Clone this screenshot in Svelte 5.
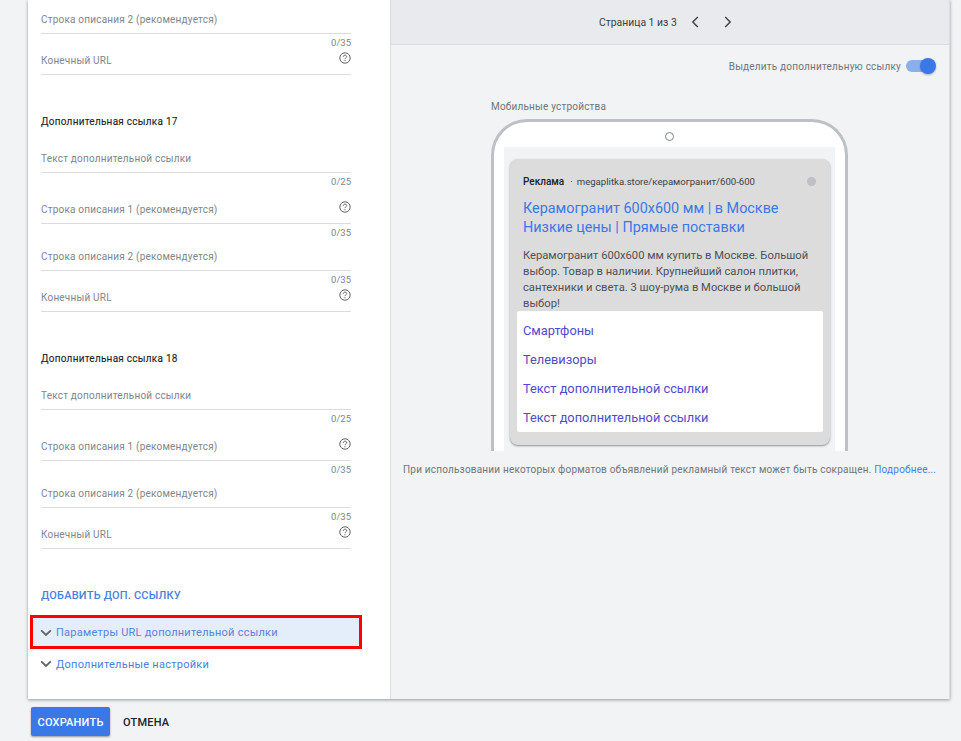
<script>
  const sections = [
    {
      fields: [
        { label: 'Строка описания 2 (рекомендуется)', counter: '0/35', gap: 0 },
        { label: 'Конечный URL', help: true, gap: 0 }
      ]
    },
    {
      title: 'Дополнительная ссылка 17',
      fields: [
        { label: 'Текст дополнительной ссылки', counter: '0/25', gap: 18 },
        { label: 'Строка описания 1 (рекомендуется)', counter: '0/35', help: true, gap: 10 },
        { label: 'Строка описания 2 (рекомендуется)', counter: '0/35', gap: 6 },
        { label: 'Конечный URL', help: true, gap: 0 }
      ]
    },
    {
      title: 'Дополнительная ссылка 18',
      fields: [
        { label: 'Текст дополнительной ссылки', counter: '0/25', gap: 18 },
        { label: 'Строка описания 1 (рекомендуется)', counter: '0/35', help: true, gap: 10 },
        { label: 'Строка описания 2 (рекомендуется)', counter: '0/35', gap: 6 },
        { label: 'Конечный URL', help: true, gap: 0 }
      ]
    }
  ];

  const sitelinks = ['Смартфоны', 'Телевизоры', 'Текст дополнительной ссылки', 'Текст дополнительной ссылки'];
</script>

{#snippet chevron()}
  <svg class="chev" width="12" height="8" viewBox="0 0 12 8" fill="none">
    <path d="M1.2 1.4L6 6L10.8 1.4" stroke="#5f6368" stroke-width="1.8" />
  </svg>
{/snippet}

<div class="page">
  <main class="card">
    <section class="form">
      {#each sections as section}
        <div class="section">
          {#if section.title}
            <h3>{section.title}</h3>
          {/if}
          {#each section.fields as field}
            <div class="field" style="margin-top: {field.gap}px">
              <div class="input">
                <span>{field.label}</span>
                {#if field.help}
                  <svg class="help" width="12" height="12" viewBox="0 0 12 12" fill="none">
                    <circle cx="6" cy="6" r="5.2" stroke="#5f6368" stroke-width="1" />
                    <path d="M4.3 4.8C4.3 3.8 5 3.2 6 3.2C7 3.2 7.7 3.8 7.7 4.6C7.7 5.7 6 5.8 6 7.1" stroke="#5f6368" stroke-width="1" />
                    <circle cx="6" cy="8.7" r="0.6" fill="#5f6368" />
                  </svg>
                {/if}
              </div>
              {#if field.counter}
                <div class="counter">{field.counter}</div>
              {/if}
            </div>
          {/each}
        </div>
      {/each}

      <div class="add">ДОБАВИТЬ ДОП. ССЫЛКУ</div>
      <div class="expander marked">
        {@render chevron()}
        <span>Параметры URL дополнительной ссылки</span>
      </div>
      <div class="expander plain">
        {@render chevron()}
        <span>Дополнительные настройки</span>
      </div>
    </section>

    <section class="preview">
      <header class="pager">
        <span>Страница 1 из 3</span>
        <svg class="prev" width="8" height="12" viewBox="0 0 8 12" fill="none">
          <path d="M6.8 1L1.8 6L6.8 11" stroke="#3c4043" stroke-width="1.4" />
        </svg>
        <svg class="next" width="8" height="12" viewBox="0 0 8 12" fill="none">
          <path d="M1.2 1L6.2 6L1.2 11" stroke="#3c4043" stroke-width="1.4" />
        </svg>
      </header>

      <div class="highlight">
        <span>Выделить дополнительную ссылку</span>
        <div class="toggle"><div class="knob"></div></div>
      </div>

      <div class="device">
        <div class="device-label">Мобильные устройства</div>
        <div class="phone">
          <div class="camera"></div>
          <div class="screen">
            <div class="ad">
              <div class="ad-top">
                <b>Реклама</b>
                <span class="dot">·</span>
                <span>megaplitka.store/керамогранит/600-600</span>
                <i></i>
              </div>
              <div class="ad-title">Керамогранит 600х600 мм | в Москве<br />Низкие цены | Прямые поставки</div>
              <p>Керамогранит 600х600 мм купить в Москве. Большой выбор. Товар в наличии. Крупнейший салон плитки, сантехники и света. 3 шоу-рума в Москве и большой выбор!</p>
              <div class="links">
                {#each sitelinks as link}
                  <div>{link}</div>
                {/each}
              </div>
            </div>
          </div>
        </div>
      </div>

      <div class="note">При использовании некоторых форматов объявлений рекламный текст может быть сокращен. <span>Подробнее...</span></div>
    </section>
  </main>

  <footer class="actions">
    <button class="save">СОХРАНИТЬ</button>
    <button class="cancel">ОТМЕНА</button>
  </footer>
</div>

<style>
  :global(body) {
    margin: 0;
    background: #f1f3f4;
    font-family: Roboto, "Liberation Sans", sans-serif;
  }

  .page {
    height: 741px;
    overflow: hidden;
    box-sizing: border-box;
    padding-left: 28px;
    padding-right: 11px;
  }

  .card {
    display: flex;
    height: 699px;
    background: #f1f3f4;
    box-shadow: 0 1px 3px rgba(60, 64, 67, 0.5);
  }

  .form {
    width: 363px;
    flex: none;
    box-sizing: border-box;
    padding: 9px 39px 0 13px;
    background: #fff;
    border-right: 1px solid #dadce0;
  }

  .section {
    margin-bottom: 38px;
  }

  h3 {
    margin: 0;
    padding-top: 1px;
    font-size: 10px;
    line-height: 16px;
    font-weight: 400;
    color: #202124;
    -webkit-text-stroke: 0.1px #202124;
    letter-spacing: 0.25px;
  }

  .input {
    display: flex;
    justify-content: space-between;
    padding: 1px 0 3px;
    line-height: 20px;
    font-size: 10px;
    letter-spacing: 0.2px;
    color: #80868b;
    border-bottom: 1px solid #dadce0;
  }

  .help {
    margin-top: 1px;
  }

  .counter {
    height: 16px;
    line-height: 18px;
    font-size: 9.5px;
    text-align: right;
    color: #80868b;
  }

  .add {
    font-size: 11px;
    line-height: 17px;
    font-weight: 500;
    letter-spacing: 0.2px;
    color: #4a7fdc;
  }

  .expander {
    display: flex;
    align-items: center;
    gap: 4px;
    font-size: 11px;
    letter-spacing: 0.25px;
    color: #4a7fdc;
  }

  .chev {
    flex: none;
  }

  .marked {
    box-sizing: border-box;
    width: 332px;
    height: 34px;
    margin: 11px 0 0 -11px;
    padding: 1px 0 0 7px;
    border: 3px solid #f00;
    background: #e3eefa;
    color: #5a82dc;
  }

  .plain {
    height: 16px;
    margin: 7px 0 0 -1px;
  }

  .preview {
    flex: 1;
    display: flex;
    flex-direction: column;
    min-width: 0;
    border-right: 1px solid #dadce0;
  }

  .pager {
    display: flex;
    align-items: center;
    height: 45px;
    box-sizing: border-box;
    padding: 0 0 0 208px;
    background: #e8eaed;
    border-bottom: 1px solid #dadce0;
    font-size: 10.4px;
    color: #3c4043;
  }

  .prev {
    margin-left: 14px;
  }

  .next {
    margin-left: 25px;
  }

  .highlight {
    display: flex;
    justify-content: flex-end;
    align-items: center;
    gap: 5px;
    height: 16px;
    margin-top: 13px;
    padding-right: 14px;
    font-size: 10px;
    letter-spacing: 0.2px;
    color: #70757a;
  }

  .toggle {
    position: relative;
    width: 24px;
    height: 12px;
    margin-right: 5px;
    border-radius: 6px;
    background: #8ab0ea;
  }

  .knob {
    position: absolute;
    top: -2px;
    right: -6px;
    width: 16px;
    height: 16px;
    border-radius: 50%;
    background: #3b78e7;
    box-shadow: 0 1px 2px rgba(60, 64, 67, 0.4);
  }

  .device {
    margin: 27px 0 0 100px;
    width: 357px;
  }

  .device-label {
    height: 12px;
    line-height: 12px;
    font-size: 10px;
    letter-spacing: 0.2px;
    color: #70757a;
  }

  .phone {
    box-sizing: border-box;
    height: 332px;
    margin-top: 6px;
    padding: 0 10px;
    background: #fff;
    border: 3px solid #bdc1c6;
    border-bottom: 0;
    border-radius: 36px 36px 0 0;
    overflow: hidden;
  }

  .camera {
    box-sizing: border-box;
    width: 9px;
    height: 9px;
    margin: 10px auto 6px;
    border: 1px solid #80868b;
    border-radius: 50%;
  }

  .screen {
    height: 304px;
    padding: 12px 5px 0 6px;
    background: #f1f3f4;
  }

  .ad {
    box-sizing: border-box;
    width: 320px;
    height: 286px;
    padding: 14px 7px 0;
    background: #dcdcdc;
    border-radius: 8px;
    box-shadow: 0 1px 2px rgba(60, 64, 67, 0.55);
  }

  .ad-top {
    display: flex;
    align-items: center;
    gap: 4px;
    height: 16px;
    padding: 0 6px;
    font-size: 9.6px;
    color: #3c4043;
  }

  .ad-top b {
    font-size: 10px;
    font-weight: 500;
    color: #202124;
  }

  .dot {
    margin-left: 2px;
  }

  .ad-top i {
    width: 9px;
    height: 9px;
    margin-left: auto;
    margin-right: 1px;
    border-radius: 50%;
    background: #bdc1c6;
  }

  .ad-title {
    margin-top: 10px;
    padding: 0 6px;
    font-size: 14.4px;
    line-height: 19px;
    color: #3b78e7;
  }

  p {
    margin: 11px 0 0;
    padding: 0 6px;
    font-size: 11.2px;
    line-height: 16px;
    color: #4d5156;
  }

  .links {
    margin-top: -1px;
    padding: 5px 6px 0;
    height: 116px;
    background: #fff;
    border-radius: 2px;
    font-size: 12.8px;
    color: #4f4bc9;
  }

  .links div {
    height: 29px;
    line-height: 29px;
  }

  .note {
    margin-top: 13px;
    padding-left: 12px;
    font-size: 10px;
    line-height: 12px;
    letter-spacing: 0.2px;
    white-space: nowrap;
    color: #70757a;
  }

  .note span {
    color: #4a7fdc;
  }

  .actions {
    display: flex;
    align-items: center;
    gap: 13px;
    margin-top: 8px;
    padding-left: 3px;
  }

  button {
    font-family: inherit;
    font-size: 11px;
    font-weight: 500;
    letter-spacing: 0.2px;
    border: 0;
    padding: 2px 0 0;
  }

  .save {
    width: 79px;
    height: 29px;
    background: #3b78e7;
    color: #fff;
    border-radius: 2px;
    box-shadow: 0 1px 2px rgba(60, 64, 67, 0.5);
  }

  .cancel {
    background: none;
    color: #202124;
  }
</style>
